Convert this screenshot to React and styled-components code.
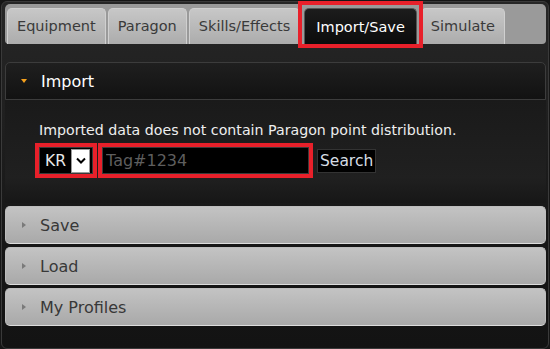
import React from 'react';
import styled, { createGlobalStyle } from 'styled-components'

const GlobalStyle = createGlobalStyle`
  html, body {
    margin: 0;
    padding: 0;
    background: #161616;
  }
  body {
    font-family: "DejaVu Sans", Verdana, sans-serif;
  }
`

const Frame = styled.div`
  box-sizing: border-box;
  width: 548px;
  height: 348px;
  margin: 1px 0 0 1px;
  padding: 2px 2px 0 3px;
  border: 1px solid #3a3a3a;
  border-radius: 6px;
  background: linear-gradient(#262626, #202020 30%, #161616 70%, #131313);
`

const TabBar = styled.ul`
  box-sizing: border-box;
  display: flex;
  align-items: flex-end;
  gap: 2px;
  height: 40px;
  margin: 0;
  padding: 0 2px;
  list-style: none;
  background: #9a9a9a;
  border-radius: 5px 5px 4px 4px;
`

const Tab = styled.li`
  position: relative;
  box-sizing: border-box;
  height: ${props => props.$active ? '37px' : '36px'};
  padding: 0 ${props => props.$active ? '11px' : '9px'};
  margin: 0 ${props => props.$active ? '2px' : '0'};
  font-size: 14.5px;
  line-height: ${props => props.$active ? '36px' : '35px'};
  color: ${props => props.$active ? '#ffffff' : '#3a3a3a'};
  background: ${props => props.$active
    ? 'linear-gradient(#1c1c1c, #0b0b0b)'
    : 'linear-gradient(#c7c7c7, #acacac)'};
  border: 1px solid ${props => props.$active ? '#555555' : '#d0d0d0'};
  border-bottom: none;
  border-radius: 5px 5px 0 0;
  margin-bottom: ${props => props.$active ? '-1px' : '0'};

  &::after {
    content: '';
    display: ${props => props.$marked ? 'block' : 'none'};
    position: absolute;
    top: -8px;
    left: -7px;
    right: -7px;
    bottom: -3px;
    border: 4px solid #e8202a;
    z-index: 1;
  }
`

const Panel = styled.div`
  padding-top: 18px;
`

const Section = styled.div`
  & + & {
    margin-top: 3px;
  }
`

const Header = styled.div`
  box-sizing: border-box;
  display: flex;
  align-items: center;
  height: 38px;
  padding-left: 14px;
  font-size: 16px;
  color: ${props => props.$open ? '#ffffff' : '#383838'};
  background: ${props => props.$open
    ? 'linear-gradient(#1f1f1f, #121212)'
    : 'linear-gradient(#c3c3c3, #a9a9a9)'};
  border: 1px solid ${props => props.$open ? '#3c3c3c' : '#bdbdbd'};
  border-bottom-color: ${props => props.$open ? '#3c3c3c' : '#dddddd'};
  border-radius: ${props => props.$open ? '5px 5px 0 0' : '5px'};
`

const Caret = styled.span`
  display: inline-block;
  width: 0;
  height: 0;
  margin-right: 14px;
  border-style: solid;
  border-color: transparent;
  ${props => props.$open
    ? 'border-width: 4px 3.5px 0 3.5px; border-top-color: #f5a01c; margin-left: 1px;'
    : 'border-width: 3.5px 0 3.5px 4px; border-left-color: #7a7a7a; margin-left: 2px;'}
`

const Body = styled.div`
  padding: 21px 0 25px 30px;
  background: linear-gradient(#1a1a1a, #202020 75%, #171717);
`

const Notice = styled.p`
  margin: 0 0 4px;
  padding-left: 4px;
  font-size: 14.2px;
  line-height: 18px;
  color: #eeeeee;
`

const FormRow = styled.div`
  display: flex;
  align-items: center;
`

const Mark = styled.div`
  display: flex;
  border: 4px solid #e8202a;
  margin-right: ${props => props.$gap || 0}px;
`

const SelectBox = styled.div`
  box-sizing: border-box;
  display: flex;
  align-items: center;
  justify-content: space-between;
  width: 54px;
  height: 27px;
  padding: 0 2px 0 5px;
  background: #000000;
  border: 1px solid #3a3a3a;
  color: #e8e8e8;
  font-size: 15.5px;
`

const DropButton = styled.span`
  box-sizing: border-box;
  display: flex;
  align-items: center;
  justify-content: center;
  width: 19px;
  height: 24px;
  background: #ffffff;
  border: 1px solid #9a9a9a;
`

const TextInput = styled.input`
  box-sizing: border-box;
  width: 207px;
  height: 27px;
  margin: 0;
  padding: 0 3px;
  background: #000000;
  border: 1px solid #3a3a3a;
  color: #eeeeee;
  font-family: "DejaVu Sans", Verdana, sans-serif;
  font-size: 16px;
  outline: none;

  &::placeholder {
    color: #5e5e5e;
  }
`

const SearchButton = styled.button`
  box-sizing: border-box;
  height: 24px;
  margin: 0;
  padding: 0 2px;
  background: #000000;
  border: 1px solid #333333;
  color: #d6dde4;
  font-family: "DejaVu Sans", Verdana, sans-serif;
  font-size: 15.5px;
  line-height: 22px;
`

const tabs = ['Equipment', 'Paragon', 'Skills/Effects', 'Import/Save', 'Simulate']

const Chevron = () => (
  <svg width="10" height="7" viewBox="0 0 10 7">
    <polyline points="1,1.5 5,5.5 9,1.5" fill="none" stroke="#000" strokeWidth="2" />
  </svg>
)

const App = () => {
  return (
    <>
      <GlobalStyle />
      <Frame>
        <TabBar>
          {tabs.map(name => (
            <Tab key={name} $active={name === 'Import/Save'} $marked={name === 'Import/Save'}>
              {name}
            </Tab>
          ))}
        </TabBar>
        <Panel>
          <Section>
            <Header $open>
              <Caret $open />
              Import
            </Header>
            <Body>
              <Notice>Imported data does not contain Paragon point distribution.</Notice>
              <FormRow>
                <Mark $gap={1}>
                  <SelectBox>
                    KR
                    <DropButton><Chevron /></DropButton>
                  </SelectBox>
                </Mark>
                <Mark $gap={4}>
                  <TextInput placeholder="Tag#1234" />
                </Mark>
                <SearchButton>Search</SearchButton>
              </FormRow>
            </Body>
          </Section>
          {['Save', 'Load', 'My Profiles'].map(title => (
            <Section key={title}>
              <Header>
                <Caret />
                {title}
              </Header>
            </Section>
          ))}
        </Panel>
      </Frame>
    </>
  )
}

export default App;
